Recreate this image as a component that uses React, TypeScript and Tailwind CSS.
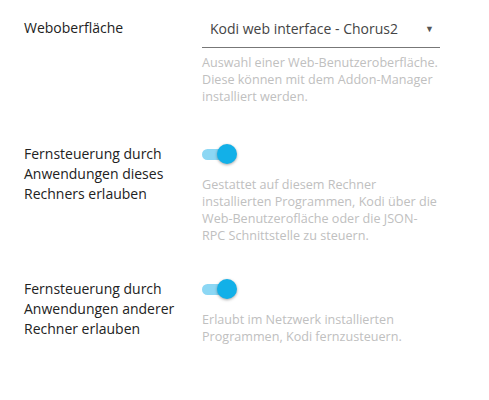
import { useState } from "react";

const Toggle = ({ defaultOn = true }: { defaultOn?: boolean }) => {
  const [on, setOn] = useState(defaultOn);
  return (
    <button
      type="button"
      onClick={() => setOn(!on)}
      className="relative flex h-[20px] w-[36px] items-center"
    >
      <span
        className={`h-[11px] w-[31px] rounded-full ${on ? "bg-[#8cd7f4]" : "bg-[#cfcfcf]"}`}
      />
      <span
        className={`absolute top-0 h-[20px] w-[20px] rounded-full shadow-[0_1px_3px_rgba(0,0,0,0.35)] ${on ? "left-[15px] bg-[#12b0e8]" : "left-0 bg-[#f5f5f5]"}`}
      />
    </button>
  );
};

const Row = ({
  label,
  children,
  className,
}: {
  label: string;
  children: React.ReactNode;
  className?: string;
}) => (
  <div className={`flex ${className ?? ""}`}>
    <div className="w-[178px] shrink-0 pr-4 text-[14px] leading-[20px] text-[#222]">
      {label}
    </div>
    <div className="w-[238px]">{children}</div>
  </div>
);

const Help = ({ children }: { children: React.ReactNode }) => (
  <p className="text-[12.6px] leading-[17px] text-[#c0c0c0]">{children}</p>
);

export default function App() {
  return (
    <div
      className="min-h-[400px] bg-white px-6 pt-[18px]"
      style={{ fontFamily: '"Open Sans", sans-serif' }}
    >
      {/* Weboberfläche */}
      <Row label="Weboberfläche">
        <div className="flex items-center justify-between border-b border-[#777] pb-[8px] pl-2 pr-[6px] pt-[1px] text-[14px] leading-[20px] text-[#444]">
          <span>Kodi web interface - Chorus2</span>
          <span className="text-[9px] text-[#555]">▼</span>
        </div>
        <div className="mt-[6px]">
          <Help>
            Auswahl einer Web-Benutzeroberfläche. Diese können mit dem
            Addon-Manager installiert werden.
          </Help>
        </div>
      </Row>

      <Row label="Fernsteuerung durch Anwendungen dieses Rechners erlauben" className="mt-[39px]">
        <Toggle />
        <div className="mt-[12px]">
          <Help>
            Gestattet auf diesem Rechner installierten Programmen, Kodi über
            die Web-Benutzerofläche oder die JSON-RPC Schnittstelle zu
            steuern.
          </Help>
        </div>
      </Row>

      <Row label="Fernsteuerung durch Anwendungen anderer Rechner erlauben" className="mt-[35px]">
        <Toggle />
        <div className="mt-[12px]">
          <Help>
            Erlaubt im Netzwerk installierten Programmen, Kodi fernzusteuern.
          </Help>
        </div>
      </Row>
    </div>
  );
}
